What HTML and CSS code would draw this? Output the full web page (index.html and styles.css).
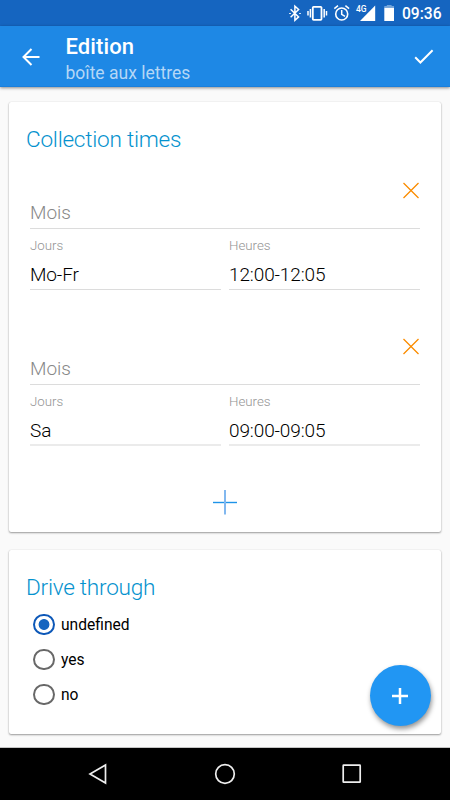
FILE: index.html
```html
<!DOCTYPE html>
<html lang="fr">
<head>
<meta charset="utf-8">
<title>Edition</title>
<link rel="stylesheet" href="styles.css">
</head>
<body>
<div class="screen">
  <div class="status">
    <svg class="status-icons" width="120" height="26" viewBox="280 0 120 26" fill="none" stroke="#fff" stroke-width="1.5">
      <path d="M290.600 9.200l8 7.700-3.700 3.400V6.200l3.700 3.300-8 7.800"/>
      <path d="M290 12.900v1M300 12.900v1" stroke-width="1.600"/>
      <rect x="312.800" y="6.800" width="8.700" height="13" rx=".8" stroke-width="1.800"/>
      <path d="M310.400 9v8.500M308 11v4.500M324.200 9v8.500M326.500 11v4.500"/>
      <circle cx="341.700" cy="14" r="6" stroke-width="1.600"/>
      <path d="M341.700 10v4.300l3.300 2M334.300 8.600l3.700-3M349.100 8.600l-3.700-3"/>
      <text class="network" x="356" y="12">4G</text>
      <path d="M360 21L375.200 5.500V21z" fill="#fff" stroke="none"/>
      <path d="M384.300 7.500H394V21h-9.700z" fill="#fff" stroke="none"/>
      <path d="M384.300 7.500V6h2.500V5h4.800v1h2.400v1.500z" fill="#73a4da" stroke="none"/>
    </svg>
    <span class="clock">09:36</span>
  </div>
  <header class="appbar">
    <svg class="back" width="20" height="20" viewBox="0 0 20 20"><path d="M18.500 10H2.300M10.500 2l-8 8 8 8"/></svg>
    <div class="heading">
      <h1>Edition</h1>
      <p>boîte aux lettres</p>
    </div>
    <svg class="done" width="20" height="16" viewBox="0 0 20 16"><path d="M1.200 8.300l5.200 5.200L18.600 1.300"/></svg>
  </header>
  <main class="content">
    <section class="card times">
      <h2>Collection times</h2>
      <div class="entry">
        <svg class="remove" width="18" height="18" viewBox="0 0 18 18"><path d="M1.500 2l15 15M16.500 2l-15 15"/></svg>
        <div class="month">Mois</div>
        <div class="pair">
          <div class="field"><div class="label">Jours</div><div class="value">Mo-Fr</div></div>
          <div class="field"><div class="label">Heures</div><div class="value">12:00-12:05</div></div>
        </div>
      </div>
      <div class="entry">
        <svg class="remove" width="18" height="18" viewBox="0 0 18 18"><path d="M1.500 2l15 15M16.500 2l-15 15"/></svg>
        <div class="month">Mois</div>
        <div class="pair">
          <div class="field"><div class="label">Jours</div><div class="value">Sa</div></div>
          <div class="field"><div class="label">Heures</div><div class="value">09:00-09:05</div></div>
        </div>
      </div>
      <svg class="add" width="26" height="26" viewBox="0 0 26 26"><path d="M1 13.500h24" stroke="#1e93e8" stroke-width="1.400"/><path d="M13 1v24.500" stroke="#82b8ef" stroke-width="2"/></svg>
    </section>
    <section class="card drive">
      <h2>Drive through</h2>
      <div class="option"><span class="radio checked"></span>undefined</div>
      <div class="option"><span class="radio"></span>yes</div>
      <div class="option"><span class="radio"></span>no</div>
    </section>
  </main>
  <nav class="navbar">
    <svg width="24" height="24" viewBox="0 0 24 24"><path d="M18.500 3v18L3 12z"/></svg>
    <svg width="24" height="24" viewBox="0 0 24 24"><circle cx="12" cy="12" r="9.300"/></svg>
    <svg width="24" height="24" viewBox="0 0 24 24"><rect x="3.200" y="3.200" width="17" height="17" rx=".5"/></svg>
  </nav>
  <div class="fab"><svg width="18" height="18" viewBox="0 0 18 18"><path d="M1 9h16M9 1v16"/></svg></div>
</div>
</body>
</html>
```

FILE: styles.css
```css
* { box-sizing: border-box; }
body { margin: 0; font-family: Roboto, "Liberation Sans", sans-serif; }
h1, h2, p { margin: 0; }
.screen { position: relative; width: 450px; height: 800px; overflow: hidden; background: #fafafa; display: flex; flex-direction: column; }
svg { display: block; flex: none; }

.status { height: 26px; flex: none; background: #1565c0; display: flex; justify-content: flex-end; padding-right: 8px; color: #fff; }
.network { font: 500 8.5px Roboto, sans-serif; fill: #fff; stroke: none; }
.clock { width: 42px; padding-left: 2px; font-size: 15.600px; font-weight: 500; line-height: 28px; white-space: nowrap; }

.appbar { position: relative; height: 61px; flex: none; background: #1e88e5; border-bottom: 1px solid #1a7fdc; box-shadow: 0 1px 3px rgba(0,0,0,.45); display: flex; color: #fff; }
.back { margin: 21px 0 0 21px; }
.back path, .done path { fill: none; stroke: #fff; stroke-width: 2; }
.heading { flex: 1; margin: 8px 0 0 24.500px; }
.heading h1 { font-size: 22px; font-weight: 500; letter-spacing: .1px; line-height: 26px; }
.heading p { font-size: 17.500px; line-height: 26px; color: #b5d7f6; }
.done { margin: 23px 16px 0 0; }

.content { flex: 1; padding: 15px 9px 0; }
.card { background: #fff; border-radius: 2px; box-shadow: 0 1px 2px rgba(0,0,0,.38), 0 0 1px rgba(0,0,0,.16); }
.card h2 { font-size: 22.600px; font-weight: 300; letter-spacing: -.26px; line-height: 28px; color: #0592ce; padding-left: 17px; white-space: nowrap; }
.times { height: 430px; padding-top: 24px; }
.entry { height: 156px; padding: 27px 21px 0; }
.remove { margin-left: auto; margin-right: .5px; }
.remove path { stroke: #fb8c00; stroke-width: 1.300; }
.month { height: 30px; font-size: 19px; font-weight: 300; line-height: 28px; color: #888; border-bottom: 1px solid #dcdcdc; }
.pair { display: grid; grid-template-columns: 191px 191px; gap: 8px; }
.label { margin-top: 9px; height: 16px; font-size: 13.300px; font-weight: 300; line-height: 16px; color: #949494; }
.value { height: 36px; padding-top: 8px; font-size: 19px; font-weight: 300; letter-spacing: -.12px; line-height: 26px; color: #000; border-bottom: 1px solid #dcdcdc; }
.entry + .entry .value { border-bottom: 2px solid #ebebeb; }
.add { margin: 23px auto 0; }

.drive { margin-top: 18px; height: 184px; padding-top: 24px; }
.drive h2 { margin-bottom: 5px; }
.option { height: 35px; display: flex; align-items: center; padding-left: 24px; gap: 6.500px; font-size: 15.600px; color: #000; }
.radio { width: 21.500px; height: 21.500px; border: 2px solid #686868; border-radius: 50%; }
.radio.checked { border-color: #0d58b8; background: radial-gradient(circle, #1565c0 5px, #fff 5.800px); }

.navbar { height: 52px; flex: none; background: #000; display: flex; justify-content: center; gap: 102.500px; padding-top: 14px; box-shadow: 0 -1px 0 #c4c4c4; }
.navbar svg { fill: none; stroke: #eee; stroke-width: 1.700; }
.fab { position: absolute; left: 369.500px; top: 665px; width: 61px; height: 61px; border-radius: 50%; background: #2196f3; box-shadow: 1px 3px 5px rgba(0,0,0,.42); display: flex; align-items: center; justify-content: center; }
.fab path { stroke: #fff; stroke-width: 2.500; }
```
